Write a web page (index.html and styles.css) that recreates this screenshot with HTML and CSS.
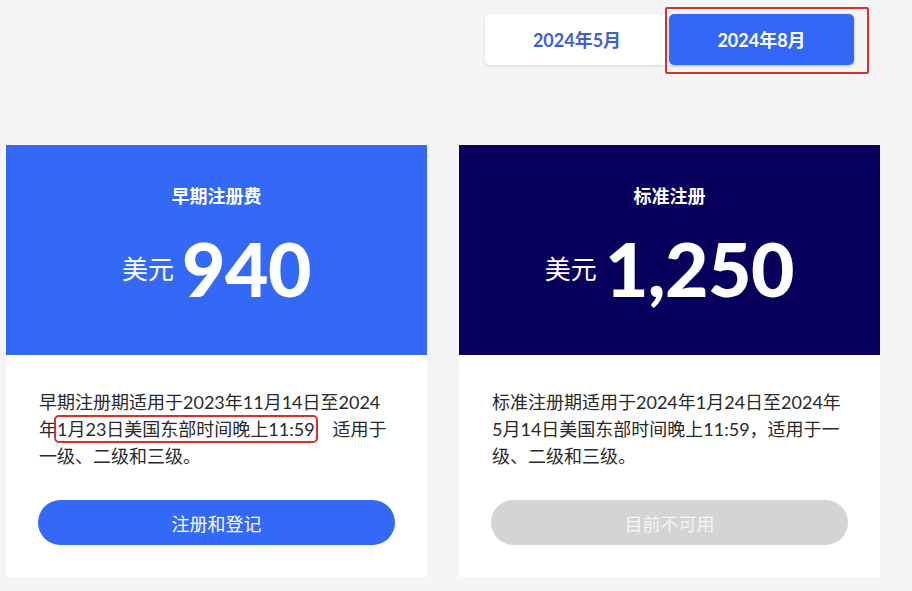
FILE: index.html
```html
<!DOCTYPE html>
<html lang="zh-CN">
<head>
<meta charset="utf-8">
<title>注册费</title>
<link rel="stylesheet" href="styles.css">
</head>
<body>
<div class="page">
  <div class="tabs-row">
    <div class="tabs">
      <button class="tab">2024年5月</button>
      <button class="tab tab-active">2024年8月</button>
      <span class="mark mark-tab"></span>
    </div>
  </div>
  <div class="cards">
    <div class="card">
      <div class="card-head head-blue">
        <div class="card-title">早期注册费</div>
        <div class="price"><span class="currency">美元</span><span class="amount">940</span></div>
      </div>
      <div class="card-body">
        <p class="desc">早期注册期适用于2023年11月14日至2024年<span class="marked">1月23日美国东部时间晚上11:59</span>　适用于一级、二级和三级。</p>
        <button class="cta cta-blue">注册和登记</button>
      </div>
    </div>
    <div class="card">
      <div class="card-head head-navy">
        <div class="card-title">标准注册</div>
        <div class="price"><span class="currency">美元</span><span class="amount">1,250</span></div>
      </div>
      <div class="card-body">
        <p class="desc">标准注册期适用于2024年1月24日至2024年5月14日美国东部时间晚上11:59，适用于一级、二级和三级。</p>
        <button class="cta cta-grey">目前不可用</button>
      </div>
    </div>
  </div>
</div>
</body>
</html>
```

FILE: styles.css
```css
html, body {
  margin: 0;
  padding: 0;
  background: #f5f5f6;
}
body {
  font-family: Lato, "Noto Sans CJK SC", sans-serif;
  color: #2a2a2a;
}
.page {
  width: 912px;
  height: 591px;
  overflow: hidden;
  padding-top: 14px;
  box-sizing: border-box;
}
.tabs-row {
  display: flex;
  justify-content: flex-start;
  padding-left: 485px;
}
.tabs {
  position: relative;
  display: flex;
  background: #ffffff;
  border-radius: 5px;
  box-shadow: 0 1px 3px rgba(0,0,0,0.12);
}
.tab {
  width: 184px;
  height: 51px;
  border: none;
  background: transparent;
  font-family: Lato, "Noto Sans CJK SC", sans-serif;
  font-weight: 700;
  font-size: 18px;
  color: #3d5fd4;
  padding: 0 0 2px;
  cursor: pointer;
}
.tab-active {
  width: 185px;
  background: #3367f7;
  color: #ffffff;
  border-radius: 5px;
  box-shadow: 0 1px 3px rgba(0,0,0,0.15);
}
.mark {
  position: absolute;
  border: 2px solid #d9302a;
  border-radius: 2px;
  box-sizing: border-box;
  pointer-events: none;
}
.mark-tab {
  left: 180px;
  top: -7px;
  width: 204px;
  height: 67px;
}
.cards {
  display: flex;
  gap: 32px;
  padding-left: 6px;
  margin-top: 80px;
}
.card {
  width: 421px;
  background: #ffffff;
}
.card-head {
  height: 210px;
  box-sizing: border-box;
  padding-top: 40px;
  color: #ffffff;
  text-align: center;
}
.head-blue { background: #3468f7; }
.head-navy { background: #07005d; }
.card-title {
  font-weight: 700;
  font-size: 18px;
  line-height: 22px;
}
.price {
  display: flex;
  justify-content: center;
  align-items: center;
  margin-top: 21px;
  gap: 8px;
}
.currency {
  font-size: 26px;
  line-height: 1;
  padding-top: 2px;
}
.amount {
  font-weight: 900;
  font-size: 75px;
  line-height: 80px;
  letter-spacing: -0.5px;
}
.card-body {
  padding: 34px 33px 32px;
}
.desc {
  margin: 0;
  font-size: 18px;
  line-height: 27px;
}
.marked {
  outline: 2px solid #d9302a;
  outline-offset: 1px;
  border-radius: 2px;
}
.cta {
  display: block;
  width: 357px;
  height: 45px;
  margin-top: 30px;
  margin-left: -1px;
  border: none;
  border-radius: 23px;
  font-family: Lato, "Noto Sans CJK SC", sans-serif;
  font-size: 18px;
  color: #ffffff;
}
.cta-blue { background: #3468f7; }
.cta-grey { background: #d4d4d4; color: #f4f4f4; }
```
